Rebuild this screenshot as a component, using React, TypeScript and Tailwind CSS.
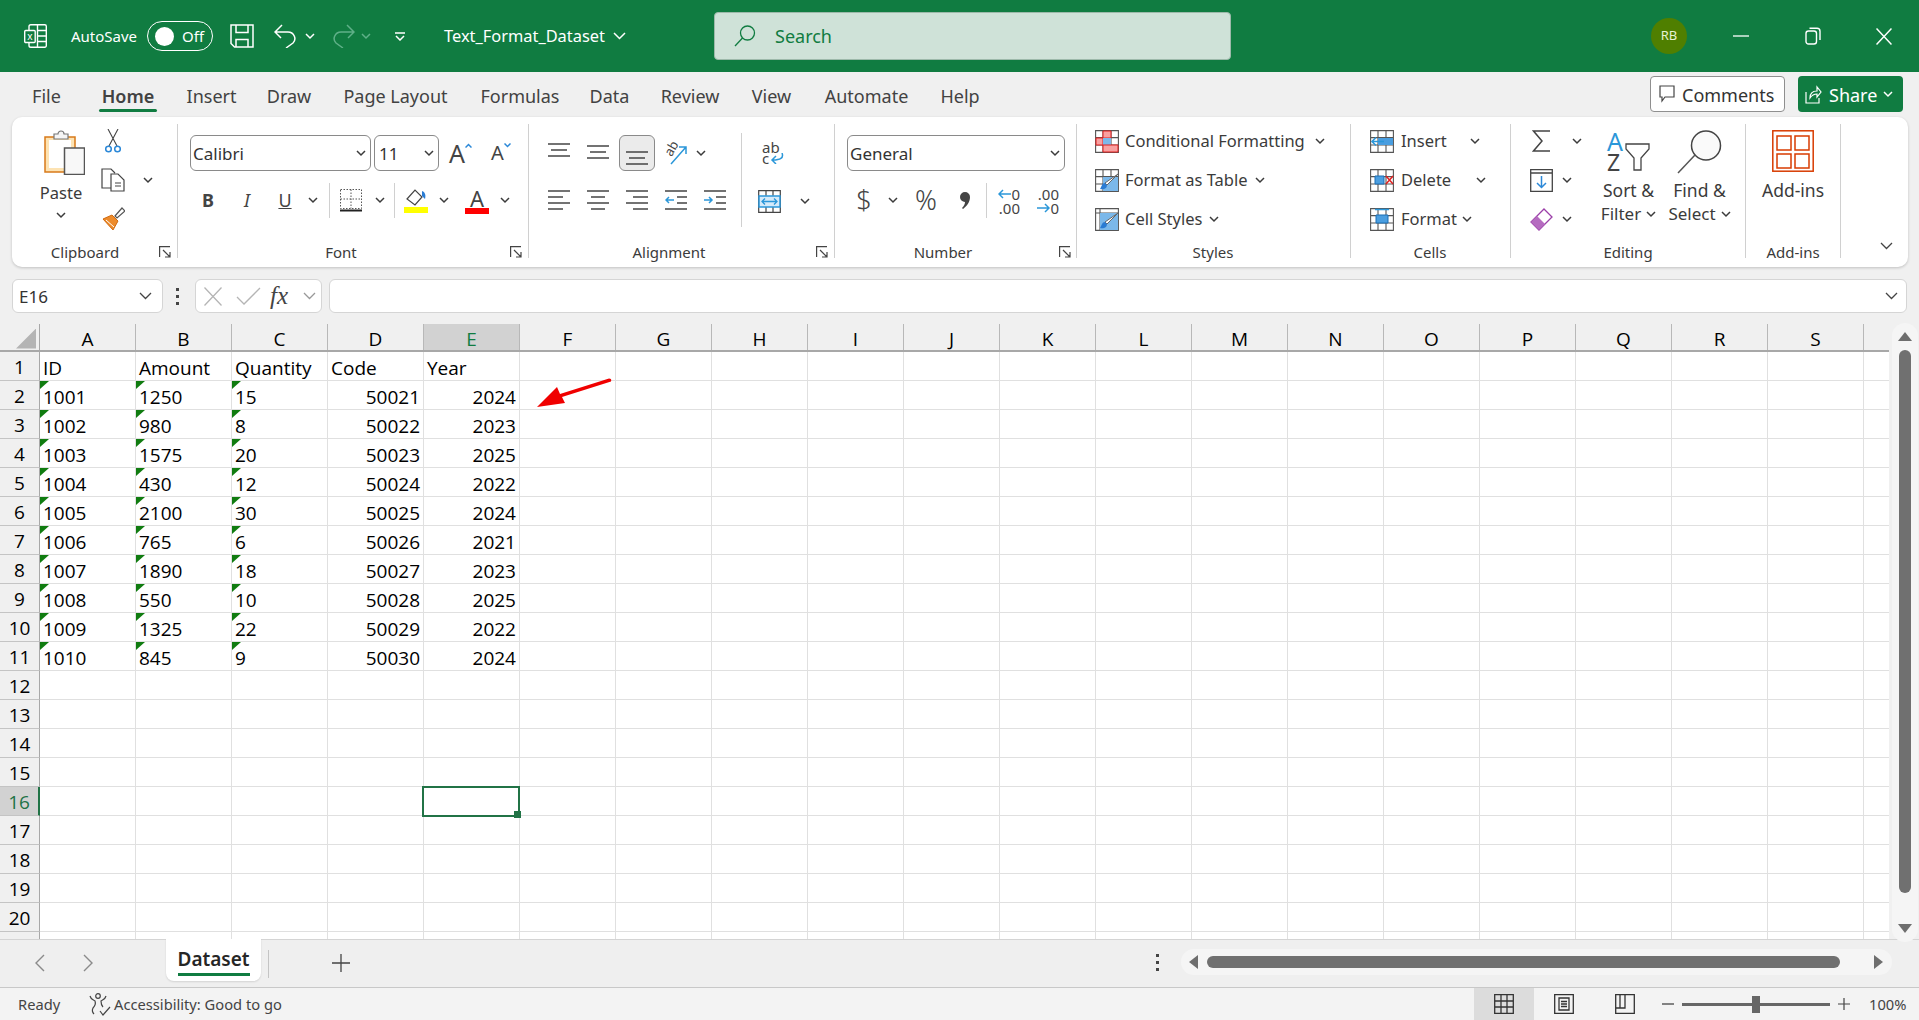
import React from "react";

const columns = ["A", "B", "C", "D", "E", "F", "G", "H", "I", "J", "K", "L", "M", "N", "O", "P", "Q", "R", "S"];

const data = [
  ["ID", "Amount", "Quantity", "Code", "Year"],
  ["1001", "1250", "15", "50021", "2024"],
  ["1002", "980", "8", "50022", "2023"],
  ["1003", "1575", "20", "50023", "2025"],
  ["1004", "430", "12", "50024", "2022"],
  ["1005", "2100", "30", "50025", "2024"],
  ["1006", "765", "6", "50026", "2021"],
  ["1007", "1890", "18", "50027", "2023"],
  ["1008", "550", "10", "50028", "2025"],
  ["1009", "1325", "22", "50029", "2022"],
  ["1010", "845", "9", "50030", "2024"],
];

const tabs = [
  { name: "File", cls: "w-[81px]" },
  { name: "Home", cls: "w-[82px] font-semibold text-[#262626]" },
  { name: "Insert", cls: "w-[85px]" },
  { name: "Draw", cls: "w-[70px]" },
  { name: "Page Layout", cls: "w-[143px]" },
  { name: "Formulas", cls: "w-[106px]" },
  { name: "Data", cls: "w-[73px]" },
  { name: "Review", cls: "w-[88px]" },
  { name: "View", cls: "w-[75px]" },
  { name: "Automate", cls: "w-[115px]" },
  { name: "Help", cls: "w-[72px]" },
];

const Chev = ({ className = "ml-0", color = "#3b3b3b" }: { className?: string; color?: string }) => (
  <svg className={`shrink-0 ${className}`} width="10" height="7" viewBox="0 0 10 7" fill="none" stroke={color} strokeWidth="1.5">
    <path d="M1 1l4 4 4-4" />
  </svg>
);

const Launcher = ({ className = "" }: { className?: string }) => (
  <svg className={`shrink-0 ${className}`} width="12" height="12" viewBox="0 0 12 12" fill="none" stroke="#444" strokeWidth="1.2">
    <path d="M.6 11V.6H11M4 4l7 7M11 6v5H6" />
  </svg>
);

const Sep = ({ className = "" }: { className?: string }) => <div className={`w-px h-[35px] bg-[#d0d0d0] shrink-0 ${className}`} />;

const GroupLabel = ({ text, className, launcher }: { text: string; className: string; launcher?: string }) => (
  <div className="mt-auto h-[12px] flex items-center shrink-0">
    <span className={`text-center text-[15px] leading-[12px] text-[#3b3b3b] whitespace-nowrap ${className}`}>{text}</span>
    {launcher && <Launcher className={launcher} />}
  </div>
);

const Lines = ({ y, widths }: { y: number[]; widths: number[][] }) => (
  <svg className="shrink-0" width="22" height="20" viewBox="0 0 22 20" fill="none" stroke="#444" strokeWidth="1.5">
    {y.map((v, i) => (
      <path key={i} d={`M${widths[i][0]} ${v}H${widths[i][1]}`} />
    ))}
  </svg>
);

const GridBase = ({ children }: { children?: React.ReactNode }) => (
  <svg className="shrink-0" width="24" height="23" viewBox="0 0 24 23" fill="none">
    <path d="M.6.6h22.8v21.8H.6zM8 .6v21.800M16 .6v21.800M.6 7.600h22.800M.6 15h22.800" stroke="#555" strokeWidth="1.1" />
    {children}
  </svg>
);

const Brush = () => (
  <g>
    <path d="M23 5L12 16l-2-2z" fill="#fff" stroke="#666" strokeWidth="1" />
    <path d="M10 14c-3 0-3 3-5 6 3 1 7 0 7-4z" fill="#2b7cd3" />
  </g>
);

const TitleBar = () => (
  <div className="h-[72px] bg-[#107c41] flex items-center shrink-0 text-white">
    <svg className="ml-[24px] shrink-0" width="23" height="24" viewBox="0 0 23 24" fill="none" stroke="#fff" strokeWidth="1.4">
      <path d="M5 6V2.500A1.800 1.800 0 0 1 6.800.7h14A1.500 1.500 0 0 1 22.300 2.200v19.600a1.500 1.500 0 0 1-1.500 1.500h-14A1.800 1.800 0 0 1 5 21.500V19M13.500.7v22.600M13.500 6.500h8.800M13.500 12h8.800M13.500 17.500h8.800" />
      <rect x=".7" y="6.500" width="10.500" height="12" rx="1" fill="#107c41" />
      <text x="6" y="16" fontSize="10" fill="#fff" stroke="none" textAnchor="middle" fontFamily="Noto Sans">x</text>
    </svg>
    <span className="ml-[24px] w-[65px] text-[15px] whitespace-nowrap">AutoSave</span>
    <div className="ml-[11px] w-[66px] h-[30px] rounded-full border border-white flex items-center pl-[7px] shrink-0">
      <div className="w-[19px] h-[19px] rounded-full bg-white" />
      <span className="ml-[8px] text-[15px]">Off</span>
    </div>
    <svg className="ml-[17px] shrink-0" width="24" height="24" viewBox="0 0 24 24" fill="none" stroke="#fff" strokeWidth="1.500">
      <path d="M1 1h22v22H4.500L1 19.500zM6 1v7.500h12V1M6 23v-7.500h12V23" />
    </svg>
    <svg className="ml-[20px] shrink-0" width="24" height="24" viewBox="0 0 24 24" fill="none" stroke="#fff" strokeWidth="1.500">
      <path d="M8 1L1 8l6 6M1 8h13c6 0 9 7 5 11l-7 5" />
    </svg>
    <Chev className="ml-[7px]" color="#fff" />
    <svg className="ml-[16px] shrink-0" width="24" height="24" viewBox="0 0 24 24" fill="none" stroke="#5fb088" strokeWidth="1.500">
      <path d="M16 1l7 7-6 6M23 8H10C4 8 1 15 5 19l7 5" />
    </svg>
    <Chev className="ml-[6px]" color="#5fb088" />
    <svg className="ml-[24px] shrink-0" width="10" height="9" viewBox="0 0 10 9" fill="none" stroke="#fff" strokeWidth="1.500">
      <path d="M0 1h10M1 4l4 4 4-4" />
    </svg>
    <span className="ml-[39px] w-[161px] text-[16.4px] whitespace-nowrap">Text_Format_Dataset</span>
    <svg className="ml-[8px] shrink-0" width="13" height="8" viewBox="0 0 13 8" fill="none" stroke="#fff" strokeWidth="1.500">
      <path d="M1 1l5.500 5.500L12 1" />
    </svg>
    <div className="ml-[88px] w-[517px] h-[48px] rounded-[4px] bg-[#cfe2d8] border border-[#9db9aa] flex items-center shrink-0">
      <svg className="ml-[19px]" width="22" height="22" viewBox="0 0 22 22" fill="none" stroke="#107c41" strokeWidth="1.300">
        <circle cx="13.500" cy="8" r="7" />
        <path d="M8.500 13L1 21" />
      </svg>
      <span className="ml-[19px] text-[18px] text-[#107c41]">Search</span>
    </div>
    <div className="ml-[420px] w-[36px] h-[36px] rounded-full bg-[#4f7f00] flex items-center justify-center text-[13px] text-[#e6f2d5] shrink-0">RB</div>
    <svg className="ml-[46px] shrink-0" width="16" height="2" viewBox="0 0 16 2">
      <path d="M0 1h16" stroke="#fff" strokeWidth="1.300" />
    </svg>
    <svg className="ml-[56px] shrink-0" width="16" height="18" viewBox="0 0 16 18" fill="none" stroke="#fff" strokeWidth="1.400">
      <rect x="1" y="4" width="10.500" height="13" rx="2.500" />
      <path d="M4.500 1.200H12a3 3 0 0 1 3 3V13" />
    </svg>
    <svg className="ml-[55px] shrink-0" width="16" height="17" viewBox="0 0 16 17" fill="none" stroke="#fff" strokeWidth="1.500">
      <path d="M.5.500l15 16M15.500.500l-15 16" />
    </svg>
  </div>
);

const TabBar = () => (
  <div className="h-[45px] flex shrink-0 items-start pl-[6px]">
    <div className="flex h-[40px] mt-[4px]">
      {tabs.map((t) => (
        <div key={t.name} className={`relative flex justify-center items-center text-[18px] text-[#424242] ${t.cls}`}>
          <span className="whitespace-nowrap">{t.name}</span>
          {t.name === "Home" && <div className="absolute left-[12px] w-[58px] top-[33px] h-[3px] bg-[#107c41] rounded-full" />}
        </div>
      ))}
    </div>
    <div className="ml-[654px] mt-[4px] w-[135px] h-[36px] bg-white border border-[#8f8f8f] rounded-[4px] flex items-center pl-[8px] text-[18px] text-[#333] shrink-0">
      <svg width="16" height="18" viewBox="0 0 16 18" fill="none" stroke="#444" strokeWidth="1.200">
        <path d="M1 1h14v11H6l-3 4 0-4H1z" />
      </svg>
      <span className="ml-[7px] pt-[2px] whitespace-nowrap">Comments</span>
    </div>
    <div className="ml-[13px] mt-[4px] w-[105px] h-[36px] bg-[#107c41] rounded-[4px] flex items-center pl-[7px] text-[18px] text-white shrink-0">
      <svg width="17" height="20" viewBox="0 0 17 20" fill="none" stroke="#fff" strokeWidth="1.200">
        <path d="M1 8v11h13v-5M5 14c0-5 3-7 7-7V3l4 5-4 5V10c-3 0-5 1-7 4z" />
      </svg>
      <span className="ml-[7px] pt-[2px]">Share</span>
      <Chev className="ml-[6px]" color="#fff" />
    </div>
  </div>
);

const Clipboard = () => (
  <div className="w-[166px] border-r border-[#d0d0d0] flex flex-col shrink-0">
    <div className="flex">
      <div className="w-[86px] pl-[12px] flex flex-col items-center shrink-0">
        <svg className="mt-[6px] ml-[6px]" width="41" height="45" viewBox="0 0 41 45" fill="none">
          <path d="M1 7h30v35H1z" fill="#fde3b3" stroke="#d87a1a" strokeWidth="1.500" />
          <path d="M5 10h22v28H5z" fill="#fff" />
          <path d="M10 7V4h4a3 3 0 0 1 6 0h4v5H10z" fill="#f5f5f5" stroke="#777" strokeWidth="1.200" />
          <path d="M20.500 18h20v26.500h-20z" fill="#f8f8f8" stroke="#555" strokeWidth="1.500" />
        </svg>
        <span className="mt-[8px] h-[20px] leading-[20px] text-[16.5px] text-[#3b3b3b]">Paste</span>
        <Chev className="mt-[9px]" />
      </div>
      <div className="flex flex-col">
        <svg className="mt-[5px] ml-[7px]" width="16" height="24" viewBox="0 0 16 24" fill="none">
          <path d="M3 0l9 17M13 0L4 17" stroke="#444" strokeWidth="1.100" />
          <circle cx="3.500" cy="20" r="2.800" stroke="#2b88d8" strokeWidth="1.500" />
          <circle cx="12.500" cy="20" r="2.800" stroke="#2b88d8" strokeWidth="1.500" />
        </svg>
        <div className="flex items-center mt-[15px]">
          <svg className="ml-[3px]" width="24" height="24" viewBox="0 0 24 24" fill="none" stroke="#444" strokeWidth="1.200">
            <path d="M10 20H1V1h9l4 4M10 6h7l6 6v11H10z" fill="#fff" />
            <path d="M14 15h6M14 18h6" />
          </svg>
          <Chev className="ml-[18px]" />
        </div>
        <svg className="mt-[15px] ml-[3px]" width="24" height="23" viewBox="0 0 24 23" fill="none">
          <path d="M2 12l9-4 6 6-5 9z" fill="#ed8b2b" stroke="#d06a10" strokeWidth="1" />
          <path d="M14 9l7-8 3 3-8 7z" fill="#fff" stroke="#555" strokeWidth="1.200" />
          <path d="M5 13l8 7" stroke="#fff" strokeWidth="1" />
        </svg>
      </div>
    </div>
    <GroupLabel text="Clipboard" className="w-[146px]" launcher="ml-[1px]" />
  </div>
);

const SelectBox = ({ value, className }: { value: string; className: string }) => (
  <div className={`h-[36px] rounded-[6px] border border-[#8a8a8a] bg-white flex items-center justify-between pl-[2px] pr-[4px] shrink-0 text-[17px] text-[#333] ${className}`}>
    <span className="pt-[1px]">{value}</span>
    <Chev />
  </div>
);

const FontGroup = () => (
  <div className="w-[351px] border-r border-[#d0d0d0] flex flex-col shrink-0">
    <div className="flex items-center mt-[11px] ml-[12px] h-[36px]">
      <SelectBox value="Calibri" className="w-[181px]" />
      <SelectBox value="11" className="ml-[3px] w-[65px] !pl-[4px]" />
      <div className="ml-[10px] w-[22px] flex items-start">
        <span className="text-[25px] leading-[24px] text-[#444]">A</span>
        <svg className="mt-[2px] shrink-0" width="7" height="5" viewBox="0 0 7 5" fill="none" stroke="#2b88d8" strokeWidth="1.500"><path d="M.5 4.500l3-3 3 3" /></svg>
      </div>
      <div className="ml-[20px] w-[20px] flex items-start">
        <span className="text-[20px] leading-[24px] text-[#444]">A</span>
        <svg className="mt-[2px] shrink-0" width="7" height="5" viewBox="0 0 7 5" fill="none" stroke="#2b88d8" strokeWidth="1.500"><path d="M.5.500l3 3 3-3" /></svg>
      </div>
    </div>
    <div className="flex items-center mt-[12px] h-[35px] text-[#444]">
      <span className="ml-[20px] w-[20px] text-center text-[18px] font-bold">B</span>
      <span className="ml-[19px] w-[20px] text-center text-[18px] italic">I</span>
      <span className="ml-[18px] w-[20px] text-center text-[18px] underline">U</span>
      <Chev className="ml-[13px]" />
      <Sep className="ml-[11px]" />
      <svg className="ml-[10px] shrink-0" width="22" height="23" viewBox="0 0 22 23" fill="none" stroke="#555" strokeWidth="1">
        <path d="M.5.500h21v19h-21zM11 .500v19M.5 10h21" strokeDasharray="1.500 1.500" />
        <path d="M0 21.500h22" stroke="#222" strokeWidth="2" strokeDasharray="none" />
      </svg>
      <Chev className="ml-[13px]" />
      <Sep className="ml-[9px]" />
      <svg className="ml-[9px] shrink-0" width="24" height="25" viewBox="0 0 24 25" fill="none">
        <path d="M3 11l8-9 7 7-7 8z" fill="#fff" stroke="#444" strokeWidth="1.200" />
        <path d="M18 3c3 1 4 4 3 8l-3-3z" fill="#2b7cd3" />
        <path d="M0 19h24v6H0z" fill="#ffff00" />
      </svg>
      <Chev className="ml-[11px]" />
      <div className="ml-[16px] w-[24px] flex flex-col items-center shrink-0">
        <span className="text-[22px] leading-[20px] text-[#444]">A</span>
        <div className="w-[24px] h-[6px] bg-[#ff0000]" />
      </div>
      <Chev className="ml-[11px]" />
    </div>
    <GroupLabel text="Font" className="w-[326px]" launcher="ml-[6px]" />
  </div>
);

const Alignment = () => (
  <div className="w-[306px] border-r border-[#d0d0d0] flex flex-col shrink-0">
    <div className="flex">
      <div className="w-[213px] h-[94px] mt-[9px] border-r border-[#d0d0d0] shrink-0">
        <div className="flex items-center h-[36px] mt-[2px]">
          <div className="ml-[19px]"><Lines y={[1, 7, 13]} widths={[[0, 22], [3, 19], [0, 22]]} /></div>
          <div className="ml-[17px]"><Lines y={[3, 9, 15]} widths={[[0, 22], [3, 19], [0, 22]]} /></div>
          <div className="ml-[10px] w-[36px] h-[36px] rounded-[6px] bg-[#ebebeb] border border-[#8a8a8a] flex items-center justify-center shrink-0">
            <div className="mt-[8px]"><Lines y={[5, 11, 17]} widths={[[0, 22], [3, 19], [0, 22]]} /></div>
          </div>
          <div className="ml-[9px] w-[24px] h-[28px] flex items-start shrink-0">
            <svg width="24" height="28" viewBox="0 0 24 28" fill="none" className="overflow-visible">
              <text x="1" y="15" fontSize="13" fill="#444" fontFamily="Noto Sans" transform="rotate(-60 7 11)">ab</text>
              <path d="M7 25L22 8M15 8h7v7" stroke="#2b97d9" strokeWidth="1.500" />
            </svg>
          </div>
          <Chev className="ml-[8px]" />
        </div>
        <div className="flex items-center h-[20px] mt-[19px]">
          <div className="ml-[19px]"><Lines y={[1, 7, 13, 19]} widths={[[0, 22], [0, 15], [0, 22], [0, 15]]} /></div>
          <div className="ml-[17px]"><Lines y={[1, 7, 13, 19]} widths={[[0, 22], [4, 18], [0, 22], [4, 18]]} /></div>
          <div className="ml-[17px]"><Lines y={[1, 7, 13, 19]} widths={[[0, 22], [7, 22], [0, 22], [7, 22]]} /></div>
          <svg className="ml-[17px] shrink-0" width="22" height="20" viewBox="0 0 22 20" fill="none" stroke="#444" strokeWidth="1.500">
            <path d="M0 1h22M12 7h10M12 13h10M0 19h22" />
            <path d="M9 10H1M4 7l-3 3 3 3" stroke="#2b97d9" />
          </svg>
          <svg className="ml-[17px] shrink-0" width="22" height="20" viewBox="0 0 22 20" fill="none" stroke="#444" strokeWidth="1.500">
            <path d="M0 1h22M12 7h10M12 13h10M0 19h22" />
            <path d="M0 10h8M5 7l3 3-3 3" stroke="#2b97d9" />
          </svg>
        </div>
      </div>
      <div className="flex flex-col">
        <div className="mt-[18px] ml-[20px] w-[22px] h-[24px] text-[15px] leading-[11px] text-[#444]">
          <div>ab</div>
          <div className="flex items-center">
            c
            <svg className="ml-[1px] shrink-0" width="14" height="11" viewBox="0 0 14 11" fill="none" stroke="#2b97d9" strokeWidth="1.500">
              <path d="M12 0c2 5-2 7-9 7M6 3L2 7l4 4" />
            </svg>
          </div>
        </div>
        <div className="flex items-center mt-[24px] ml-[16px]">
          <svg width="23" height="23" viewBox="0 0 23 23" fill="none">
            <path d="M.7.700h21.600v21.600H.7zM8 .7v5M15 .7v5M8 17v5.300M15 17v5.300" stroke="#444" strokeWidth="1.200" />
            <path d="M1 6h21v11H1z" fill="#d5eafa" stroke="#2b97d9" strokeWidth="1.500" />
            <path d="M4 11.500h15M7 8.500l-3 3 3 3M16 8.500l3 3-3 3" stroke="#2b97d9" strokeWidth="1.300" />
          </svg>
          <Chev className="ml-[19px]" />
        </div>
      </div>
    </div>
    <GroupLabel text="Alignment" className="w-[280px]" launcher="ml-[7px]" />
  </div>
);

const NumberGroup = () => (
  <div className="w-[242px] border-r border-[#d0d0d0] flex flex-col shrink-0">
    <div className="mt-[11px] ml-[12px]">
      <SelectBox value="General" className="w-[218px]" />
    </div>
    <div className="flex items-center mt-[12px] h-[35px] text-[#444]">
      <span className="ml-[21px] w-[16px] text-center text-[27px] font-light">$</span>
      <Chev className="ml-[16px]" />
      <span className="ml-[16px] w-[24px] text-center text-[27px] font-light">%</span>
      <svg className="ml-[22px] shrink-0" width="10" height="17" viewBox="0 0 10 17" fill="#444">
        <path d="M5 0a5 5 0 0 1 5 5c0 5-3 9-7 12l-1-1c2-2 3-4 3-6a5 5 0 0 1 0-10z" />
      </svg>
      <Sep className="ml-[16px]" />
      <div className="ml-[9px] w-[24px] flex flex-col items-end text-[15px] leading-[14px] shrink-0">
        <div className="flex items-center">
          <svg className="shrink-0" width="13" height="10" viewBox="0 0 13 10" fill="none" stroke="#2b97d9" strokeWidth="1.500"><path d="M13 5H1M5 1L1 5l4 4" /></svg>
          0
        </div>
        <div>.00</div>
      </div>
      <div className="ml-[15px] w-[24px] flex flex-col items-end text-[15px] leading-[14px] shrink-0">
        <div>.00</div>
        <div className="flex items-center">
          <svg className="shrink-0" width="13" height="10" viewBox="0 0 13 10" fill="none" stroke="#2b97d9" strokeWidth="1.500"><path d="M0 5h12M8 1l4 4-4 4" /></svg>
          0
        </div>
      </div>
    </div>
    <GroupLabel text="Number" className="w-[216px]" launcher="ml-[8px]" />
  </div>
);

const ListRow = ({ icon, text, textCls, chevCls, rowCls }: { icon: React.ReactNode; text: string; textCls: string; chevCls: string; rowCls: string }) => (
  <div className={`flex items-center ${rowCls}`}>
    {icon}
    <span className={`text-[#3b3b3b] whitespace-nowrap ${textCls}`}>{text}</span>
    <Chev className={chevCls} />
  </div>
);

const Styles = () => (
  <div className="w-[274px] border-r border-[#d0d0d0] flex flex-col shrink-0">
    <div className="ml-[18px]">
      <ListRow
        rowCls="h-[34px]"
        icon={
          <GridBase>
            <path d="M8 1h8v7H8zM1 8h7v7H1z" fill="#f8a0a0" stroke="#e02020" />
            <path d="M8 8h8v7H8z" fill="#7bb8ea" />
            <path d="M8 15h15v7H8z" fill="#f8a0a0" stroke="#e02020" />
          </GridBase>
        }
        text="Conditional Formatting"
        textCls="ml-[6px] w-[183px] text-[16.5px]"
        chevCls="ml-[7px]"
      />
      <ListRow
        rowCls="h-[38px] mt-[3px]"
        icon={
          <GridBase>
            <path d="M8 8h15v14H8z" fill="#7bb8ea" />
            <Brush />
          </GridBase>
        }
        text="Format as Table"
        textCls="ml-[6px] w-[124px] text-[16.5px]"
        chevCls="ml-[6px]"
      />
      <ListRow
        rowCls="h-[38px] mt-[1px]"
        icon={
          <svg className="shrink-0" width="24" height="23" viewBox="0 0 24 23" fill="none">
            <path d="M.6.600h22.800v21.800H.6zM.6 5h22.800M5 .6v21.800" stroke="#555" strokeWidth="1.100" />
            <path d="M5 5h18v17H5z" fill="#7bb8ea" />
            <Brush />
          </svg>
        }
        text="Cell Styles"
        textCls="ml-[6px] w-[77px] text-[16.5px]"
        chevCls="ml-[7px]"
      />
    </div>
    <GroupLabel text="Styles" className="w-[272px]" />
  </div>
);

const Cells = () => (
  <div className="w-[160px] border-r border-[#d0d0d0] flex flex-col shrink-0">
    <div className="ml-[19px]">
      <ListRow
        rowCls="h-[34px]"
        icon={
          <GridBase>
            <path d="M8 8h15v7H8z" fill="#4a9ee0" />
            <path d="M14 11.500H2M6 7.500l-4 4 4 4" stroke="#2b97d9" strokeWidth="1.600" />
          </GridBase>
        }
        text="Insert"
        textCls="ml-[7px] w-[43px] text-[16.5px]"
        chevCls="ml-[26px]"
      />
      <ListRow
        rowCls="h-[38px] mt-[3px]"
        icon={
          <GridBase>
            <path d="M5 7h9v8H5z" fill="#4a9ee0" stroke="#1b6fb5" />
            <path d="M16 7l7 8M23 7l-7 8" stroke="#e02020" strokeWidth="1.500" />
          </GridBase>
        }
        text="Delete"
        textCls="ml-[7px] w-[49px] text-[16.5px]"
        chevCls="ml-[26px]"
      />
      <ListRow
        rowCls="h-[38px] mt-[1px]"
        icon={
          <GridBase>
            <path d="M6 7h12v8H6z" fill="#4a9ee0" stroke="#1b6fb5" />
            <path d="M5 1.500h14" stroke="#2b97d9" strokeWidth="1.500" />
          </GridBase>
        }
        text="Format"
        textCls="ml-[7px] w-[56px] text-[16.5px]"
        chevCls="ml-[5px]"
      />
    </div>
    <GroupLabel text="Cells" className="w-[158px]" />
  </div>
);

const Editing = () => (
  <div className="w-[235px] border-r border-[#d0d0d0] flex flex-col shrink-0">
    <div className="flex">
      <div className="w-[82px] shrink-0">
        <div className="h-[34px] flex items-center pl-[21px]">
          <svg className="shrink-0" width="19" height="22" viewBox="0 0 19 22" fill="none" stroke="#444" strokeWidth="1.500">
            <path d="M18 1H1.500L10 11 1.500 21H18" />
          </svg>
          <Chev className="ml-[21px]" />
        </div>
        <div className="h-[38px] mt-[3px] flex items-center pl-[19px]">
          <svg className="shrink-0" width="23" height="23" viewBox="0 0 23 23" fill="none">
            <path d="M.7.700h21.600v21.600H.7zM.7 4h21.600" stroke="#444" strokeWidth="1.300" />
            <path d="M11.500 7v11M7 14l4.500 4.500L16 14" stroke="#2b88d8" strokeWidth="1.500" />
          </svg>
          <Chev className="ml-[9px]" />
        </div>
        <div className="h-[38px] mt-[1px] flex items-center pl-[19px]">
          <svg className="shrink-0" width="23" height="23" viewBox="0 0 23 23" fill="none">
            <path d="M14 1l8 8-13 13-8-8z" fill="#fff" stroke="#9b3fa8" strokeWidth="1.300" />
            <path d="M7 8l8 8-6 6-8-8z" fill="#b56cc0" />
          </svg>
          <Chev className="ml-[9px]" />
        </div>
      </div>
      <div className="w-[71px] flex flex-col items-center shrink-0">
        <div className="h-[50px] pt-[7px] flex items-start w-[43px]">
          <div className="w-[18px] flex flex-col items-start shrink-0">
            <span className="text-[25px] leading-[21px] text-[#2b97d9]">A</span>
            <span className="text-[23px] leading-[21px] text-[#444]">Z</span>
          </div>
          <svg className="mt-[12px] shrink-0" width="25" height="28" viewBox="0 0 25 28" fill="none">
            <path d="M1 1h23v5l-8 9v12H9V15L1 6z" fill="#fff" stroke="#444" strokeWidth="1.300" />
          </svg>
        </div>
        <div className="mt-[4px] text-[17.5px] leading-[24px] text-[#3b3b3b]">Sort &amp;</div>
        <div className="flex items-center text-[17px] leading-[24px] text-[#3b3b3b]">
          Filter
          <Chev className="ml-[5px]" />
        </div>
      </div>
      <div className="w-[71px] flex flex-col items-center shrink-0">
        <div className="h-[50px] flex items-end">
          <svg width="45" height="44" viewBox="0 0 45 44" fill="none">
            <circle cx="29" cy="15.500" r="14.500" fill="#fafafa" stroke="#444" strokeWidth="1.500" />
            <path d="M18 25L1 43" stroke="#555" strokeWidth="1.500" />
          </svg>
        </div>
        <div className="mt-[4px] text-[17.5px] leading-[24px] text-[#3b3b3b]">Find &amp;</div>
        <div className="flex items-center text-[17px] leading-[24px] text-[#3b3b3b]">
          Select
          <Chev className="ml-[5px]" />
        </div>
      </div>
    </div>
    <GroupLabel text="Editing" className="w-[234px]" />
  </div>
);

const AddIns = () => (
  <div className="w-[95px] border-r border-[#d0d0d0] flex flex-col items-center shrink-0">
    <div className="h-[48px] flex items-end">
      <svg width="42" height="42" viewBox="0 0 42 42" fill="none" stroke="#d83b01" strokeWidth="1.500">
        <rect x=".8" y=".8" width="40.400" height="40.400" />
        <rect x="5" y="6" width="14" height="14" />
        <rect x="23" y="6" width="14" height="14" />
        <rect x="5" y="24" width="14" height="14" />
        <rect x="23" y="24" width="14" height="14" />
      </svg>
    </div>
    <div className="mt-[6px] text-[17.5px] leading-[24px] text-[#3b3b3b]">Add-ins</div>
    <GroupLabel text="Add-ins" className="w-[94px]" />
  </div>
);

const Ribbon = () => (
  <div className="ml-[12px] w-[1896px] h-[150px] bg-white rounded-[10px] shadow-[0_1px_3px_rgba(0,0,0,0.2)] flex shrink-0">
    <div className="flex h-[134px] mt-[7px]">
      <Clipboard />
      <FontGroup />
      <Alignment />
      <NumberGroup />
      <Styles />
      <Cells />
      <Editing />
      <AddIns />
    </div>
    <div className="flex-1 flex justify-end items-end pr-[15px] pb-[17px]">
      <svg width="13" height="8" viewBox="0 0 13 8" fill="none" stroke="#444" strokeWidth="1.300">
        <path d="M1 1l5.500 5.500L12 1" />
      </svg>
    </div>
  </div>
);

const FormulaBar = () => (
  <div className="flex mt-[12px] h-[34px] shrink-0 items-center">
    <div className="ml-[12px] w-[151px] h-[34px] bg-white border border-[#d5d5d5] rounded-[6px] flex items-center justify-between pl-[6px] pr-[10px] text-[17px] text-[#333]">
      <span className="pt-[2px]">E16</span>
      <svg width="13" height="8" viewBox="0 0 13 8" fill="none" stroke="#444" strokeWidth="1.300"><path d="M1 1l5.500 5.500L12 1" /></svg>
    </div>
    <div className="ml-[13px] w-[4px] flex flex-col gap-[4px] shrink-0">
      <div className="w-[3px] h-[3px] bg-[#444]" />
      <div className="w-[3px] h-[3px] bg-[#444]" />
      <div className="w-[3px] h-[3px] bg-[#444]" />
    </div>
    <div className="ml-[15px] w-[127px] h-[34px] bg-white border border-[#d5d5d5] rounded-[6px] flex items-center shrink-0">
      <svg className="ml-[8px] shrink-0" width="18" height="19" viewBox="0 0 18 19" fill="none" stroke="#b5b5b5" strokeWidth="1.300"><path d="M.5.500l17 18M17.500.500l-17 18" /></svg>
      <svg className="ml-[14px] shrink-0" width="25" height="18" viewBox="0 0 25 18" fill="none" stroke="#b5b5b5" strokeWidth="1.300"><path d="M1 10l7 7L24 1" /></svg>
      <span className="ml-[9px] w-[27px] text-[25px] leading-[28px] italic font-['Liberation_Serif',serif] text-[#444]">fx</span>
      <svg className="ml-[6px] shrink-0" width="13" height="8" viewBox="0 0 13 8" fill="none" stroke="#999" strokeWidth="1.300"><path d="M1 1l5.500 5.500L12 1" /></svg>
    </div>
    <div className="ml-[7px] w-[1578px] h-[34px] bg-white border border-[#d5d5d5] rounded-[6px] flex items-center justify-end pr-[8px] shrink-0">
      <svg width="13" height="8" viewBox="0 0 13 8" fill="none" stroke="#444" strokeWidth="1.300"><path d="M1 1l5.500 5.500L12 1" /></svg>
    </div>
  </div>
);

const SheetGrid = () => (
  <div className="relative w-[1889px] h-[615px] overflow-hidden bg-white font-['Open_Sans',sans-serif] text-[19px] text-black shrink-0">
    <div className="flex h-[28px] bg-[#f0f0f0] border-b-2 border-[#a8a8a8]">
      <div className="w-[40px] border-r border-[#a8a8a8] flex items-center justify-end pr-[3px] pt-[3px] shrink-0">
        <div className="w-[20px] h-[20px] bg-[#b4b4b4] [clip-path:polygon(100%_0,100%_100%,0_100%)]" />
      </div>
      {columns.map((c) => (
        <div
          key={c}
          className={`w-[96px] flex items-center justify-center border-r pt-[4px] shrink-0 ${c === "E" ? "bg-[#d2d2d2] text-[#107c41] border-[#b8b8b8]" : "border-[#b8b8b8]"}`}
        >
          {c}
        </div>
      ))}
    </div>
    {Array.from({ length: 21 }, (_, r) => {
      const row = data[r];
      const active = r === 15;
      return (
        <div key={r} className="flex h-[29px]">
          <div
            className={`w-[40px] flex items-center justify-center pt-[3px] shrink-0 border-b border-b-[#c4c4c4] border-r ${active ? "bg-[#d2d2d2] text-[#217346] border-r-2 border-r-[#217346]" : "bg-[#f0f0f0] border-r-[#a8a8a8]"}`}
          >
            {r < 20 ? r + 1 : ""}
          </div>
          {columns.map((c, i) => {
            const value = row && i < 5 ? row[i] : "";
            const numeric = r > 0 && i < 3;
            const right = r > 0 && (i === 3 || i === 4);
            return (
              <div
                key={c}
                className={`relative w-[96px] shrink-0 border-r border-b border-[#e0e0e0] flex items-center pt-[4px] whitespace-nowrap ${right ? "justify-end pr-[3px]" : "pl-[3px]"}`}
              >
                {numeric && row && <div className="absolute left-0 top-0 w-[9px] h-[8px] bg-[#107c10] [clip-path:polygon(0_0,100%_0,0_100%)]" />}
                {value}
                {active && c === "E" && (
                  <div className="absolute -left-[2px] -top-[1px] w-[98px] h-[31px] border-2 border-[#217346] z-10">
                    <div className="absolute -right-[3px] -bottom-[3px] w-[7px] h-[7px] bg-[#217346]" />
                  </div>
                )}
              </div>
            );
          })}
          <div className="flex-1 border-b border-[#e0e0e0]" />
        </div>
      );
    })}
    <svg className="absolute left-[537px] top-[54px]" width="75" height="30" viewBox="0 0 75 30" fill="#f00000">
      <path d="M0 29L20 9l3 7L72 .500q3 0 2 3L25 19l3 6z" />
    </svg>
  </div>
);

const VScroll = () => (
  <div className="w-[30px] shrink-0 pl-[3px] pr-[1px] -mt-[1px] -mb-[3px] h-[619px] relative">
    <div className="w-[26px] h-full bg-[#f5f5f5] rounded-[13px] flex flex-col items-center">
      <svg className="mt-[9px]" width="14" height="9" viewBox="0 0 14 9" fill="#6e6e6e"><path d="M7 0l7 9H0z" /></svg>
      <div className="mt-[9px] w-[12px] h-[543px] rounded-[6px] bg-[#707070]" />
      <svg className="mt-[31px]" width="14" height="9" viewBox="0 0 14 9" fill="#6e6e6e"><path d="M7 9l7-9H0z" /></svg>
    </div>
  </div>
);

const SheetBar = () => (
  <div className="h-[48px] border-t border-[#d4d4d4] flex items-start shrink-0 bg-[#efefef]">
    <svg className="ml-[35px] mt-[14px] shrink-0" width="10" height="18" viewBox="0 0 10 18" fill="none" stroke="#8a8a8a" strokeWidth="1.400"><path d="M9 1L1 9l8 8" /></svg>
    <svg className="ml-[38px] mt-[14px] shrink-0" width="10" height="18" viewBox="0 0 10 18" fill="none" stroke="#8a8a8a" strokeWidth="1.400"><path d="M1 1l8 8-8 8" /></svg>
    <div className="ml-[73px] w-[95px] h-[42px] -mt-px bg-white rounded-b-[8px] flex flex-col items-center shadow-[0_1px_2px_rgba(0,0,0,0.12)] shrink-0">
      <span className="mt-[7px] text-[19px] leading-[26px] font-semibold text-[#262626]">Dataset</span>
      <div className="mt-[1px] w-[72px] h-[3px] bg-[#107c41]" />
    </div>
    <div className="ml-[7px] mt-[10px] w-px h-[28px] bg-[#c4c4c4] shrink-0" />
    <svg className="ml-[63px] mt-[14px] shrink-0" width="18" height="18" viewBox="0 0 18 18" fill="none" stroke="#444" strokeWidth="1.300"><path d="M9 0v18M0 9h18" /></svg>
    <div className="ml-[806px] mt-[14px] flex flex-col gap-[4px] shrink-0">
      <div className="w-[3px] h-[3px] bg-[#444]" />
      <div className="w-[3px] h-[3px] bg-[#444]" />
      <div className="w-[3px] h-[3px] bg-[#444]" />
    </div>
    <div className="ml-[22px] mt-[9px] w-[711px] h-[26px] bg-[#f5f5f5] rounded-[13px] flex items-center shrink-0">
      <svg className="ml-[8px] shrink-0" width="9" height="14" viewBox="0 0 9 14" fill="#6e6e6e"><path d="M0 7l9-7v14z" /></svg>
      <div className="ml-[9px] w-[633px] h-[12px] rounded-[6px] bg-[#707070]" />
      <svg className="ml-[34px] shrink-0" width="9" height="14" viewBox="0 0 9 14" fill="#6e6e6e"><path d="M9 7L0 0v14z" /></svg>
    </div>
  </div>
);

const StatusBar = () => (
  <div className="h-[33px] bg-[#f3f3f3] border-t border-[#c8c8c8] flex items-center text-[14.7px] text-[#444] shrink-0">
    <span className="ml-[18px] w-[42px] whitespace-nowrap">Ready</span>
    <svg className="ml-[29px] shrink-0" width="22" height="23" viewBox="0 0 22 23" fill="none" stroke="#444" strokeWidth="1.200">
      <circle cx="9" cy="3" r="2.300" />
      <path d="M1 3c1 4 4 4 5 5 1 3 0 5-2 7-1 2-1 4 1 6M17 3c-1 4-4 4-5 5 0 3 1 5 2 6M11 18l3 4 7-8" />
    </svg>
    <span className="ml-[3px] w-[169px] whitespace-nowrap">Accessibility: Good to go</span>
    <div className="ml-[1191px] w-[60px] h-[32px] bg-[#dcdcdc] flex items-center justify-center shrink-0">
      <svg width="20" height="20" viewBox="0 0 20 20" fill="none" stroke="#333" strokeWidth="1.300"><path d="M.7.700h18.600v18.600H.7zM7 .7v18.600M13 .7v18.600M.7 7h18.600M.7 13h18.600" /></svg>
    </div>
    <svg className="ml-[20px] shrink-0" width="20" height="20" viewBox="0 0 20 20" fill="none" stroke="#333" strokeWidth="1.300"><path d="M.7.700h18.600v18.600H.7zM5 4h10v12H5zM7 7.500h6M7 10h6M7 12.500h6" /></svg>
    <svg className="ml-[41px] shrink-0" width="20" height="20" viewBox="0 0 20 20" fill="none" stroke="#333" strokeWidth="1.300"><path d="M.7.700h18.600v18.600H.7zM.7 14H10V.7M5 .7V14" /></svg>
    <svg className="ml-[27px] shrink-0" width="12" height="2" viewBox="0 0 12 2"><path d="M0 1h12" stroke="#444" strokeWidth="1.300" /></svg>
    <div className="ml-[8px] w-[148px] h-[3px] bg-[#666] flex items-center shrink-0">
      <div className="ml-[70px] w-[8px] h-[17px] bg-[#666]" />
    </div>
    <svg className="ml-[8px] shrink-0" width="12" height="12" viewBox="0 0 12 12" fill="none" stroke="#444" strokeWidth="1.200"><path d="M6 0v12M0 6h12" /></svg>
    <span className="ml-[19px] whitespace-nowrap">100%</span>
  </div>
);

export default function App() {
  return (
    <div className="w-[1919px] h-[1020px] overflow-hidden bg-[#f0f0f0] flex flex-col font-['Noto_Sans',sans-serif]">
      <TitleBar />
      <TabBar />
      <Ribbon />
      <FormulaBar />
      <div className="flex mt-[11px] shrink-0">
        <SheetGrid />
        <VScroll />
      </div>
      <SheetBar />
      <StatusBar />
    </div>
  );
}
